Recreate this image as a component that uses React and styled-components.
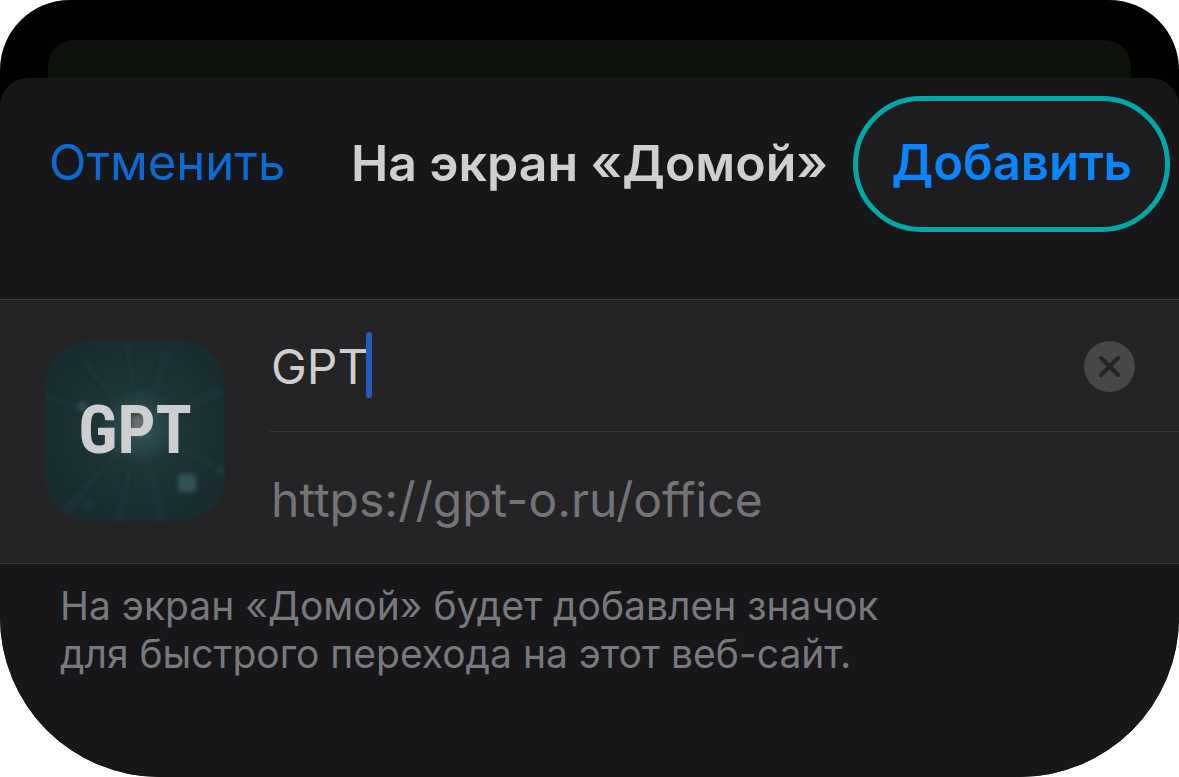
import React, { useState } from "react";
import styled, { createGlobalStyle } from "styled-components";

const GlobalStyle = createGlobalStyle`
  *, *::before, *::after { box-sizing: border-box; }
  body { margin: 0; background: #fff; font-family: Inter, "Liberation Sans", sans-serif; }
  button, input { font: inherit; }
`;

const Screen = styled.main`
  display: flex;
  flex-direction: column;
  min-height: 100vh;
  padding-top: 40px;
  overflow: hidden;
  background: linear-gradient(#000100 50%, #171719 50%);
  border-radius: 70px 70px 160px 160px;
`;

const BackCard = styled.div`
  height: 38px;
  margin: 0 48px;
  background: #0d120c;
  border-radius: 26px 26px 0 0;
`;

const Sheet = styled.form`
  flex: 1;
  background: #171719;
  border-radius: 28px 28px 0 0;
`;

const Header = styled.header`
  display: grid;
  grid-template-columns: 1fr auto 1fr;
  align-items: center;
  padding: 18px 9px 67px 49px;
`;

const Title = styled.h1`
  margin: 0 0 2px -40px;
  font-size: 50px;
  font-weight: 600;
  line-height: 64px;
  white-space: nowrap;
  color: #cfcfd0;
`;

const TextButton = styled.button`
  justify-self: start;
  padding: 0 0 2px;
  border: 0;
  background: none;
  font-size: 49px;
  line-height: 64px;
  color: #0a6bd2;
  cursor: pointer;
`;

const PillButton = styled(TextButton)`
  justify-self: end;
  height: 136px;
  padding: 0 33px 2px;
  border: 5px solid #00a9a8;
  border-radius: 68px;
  background: #1d1d1f;
  font-weight: 600;
  color: #0a84ff;
`;

const Panel = styled.section`
  display: flex;
  align-items: flex-start;
  gap: 45px;
  padding-left: 45px;
  border: solid #38383a;
  border-width: 1px 0;
  background: #242426;
`;

const AppIcon = styled.svg`
  flex: none;
  width: 180px;
  height: 180px;
  margin-top: 41px;
`;

const Fields = styled.div`
  flex: 1;
  min-width: 0;
`;

const Row = styled.div`
  display: flex;
  align-items: center;
  height: 131px;
  padding: 2px 44px 0 1px;
  font-size: 48px;
  line-height: 64px;
  color: #747477;

  & + & { border-top: 1px solid #38383a; height: 132px; padding-top: 4px; }
`;

const NameInput = styled.input`
  field-sizing: content;
  min-width: 1px;
  padding: 0;
  border: 0;
  outline: 0;
  background: none;
  line-height: 64px;
  color: #cecece;
  caret-color: transparent;
`;

const Caret = styled.span`
  flex: none;
  width: 6px;
  height: 66px;
  margin: 0 auto 4px -2px;
  border-radius: 3px;
  background: #285abd;
`;

const ClearButton = styled.button`
  flex: none;
  display: flex;
  padding: 0;
  border: 0;
  background: none;
  cursor: pointer;
`;

const Note = styled.p`
  max-width: 900px;
  margin: 0;
  padding: 18px 0 0 60px;
  font-size: 39px;
  line-height: 48px;
  color: #79797d;
`;

const rays = [
  "M94 88 78 0h8z", "M98 88 116 8l12 4z", "M102 88 174 42l6 12z", "M102 92 180 126v10z",
  "M98 92 124 180h-14z", "M92 92 68 180h12z", "M88 92 14 170l12 4z", "M88 88 0 50v8z",
  "M90 86 32 18l12 2z", "M96 92 104 140h-6z",
];

function GptIcon() {
  return (
    <AppIcon viewBox="0 0 180 180" role="img" aria-label="GPT">
      <defs>
        <clipPath id="iconShape"><rect width="180" height="180" rx="46" /></clipPath>
        <radialGradient id="iconGlow" cx="94" cy="86" r="88" gradientUnits="userSpaceOnUse">
          <stop offset="0" stopColor="#385556" />
          <stop offset=".25" stopColor="#284648" />
          <stop offset=".45" stopColor="#1e3537" />
          <stop offset="1" stopColor="#192d30" />
        </radialGradient>
        <filter id="soft"><feGaussianBlur stdDeviation="2" /></filter>
      </defs>
      <g clipPath="url(#iconShape)">
        <rect width="180" height="180" fill="url(#iconGlow)" />
        <g filter="url(#soft)">
          {rays.map((d) => <path key={d} d={d} fill="#2b474a" opacity=".16" />)}
          <rect x="133" y="133" width="18" height="18" rx="2" fill="#315154" />
          <circle cx="37" cy="65" r="5" fill="#2d4b4e" />
          <circle cx="175" cy="130" r="4" fill="#213a3d" />
          <circle cx="44" cy="163" r="6" fill="#1d3538" />
          <rect x="87" y="75" width="13" height="20" rx="5" fill="#6b6e71" />
        </g>
        <text x="90" y="112" textAnchor="middle" fontFamily='"Roboto Condensed", Roboto, sans-serif' fontWeight="700" fontSize="67" fill="#cdcecf">GPT</text>
      </g>
    </AppIcon>
  );
}

export default function App() {
  const [name, setName] = useState("GPT");
  return (
    <>
      <GlobalStyle />
      <Screen>
        <BackCard />
        <Sheet onSubmit={(e) => e.preventDefault()}>
          <Header>
            <TextButton type="button">Отменить</TextButton>
            <Title>На экран «Домой»</Title>
            <PillButton type="submit">Добавить</PillButton>
          </Header>
          <Panel>
            <GptIcon />
            <Fields>
              <Row>
                <NameInput aria-label="Название" value={name} onChange={(e) => setName(e.target.value)} />
                <Caret />
                <ClearButton type="button" aria-label="Очистить" onClick={() => setName("")}>
                  <svg width="51" height="51" viewBox="0 0 51 51">
                    <circle cx="25.5" cy="25.5" r="25.5" fill="#474749" />
                    <path d="m17 17 17 17m0-17-17 17" stroke="#242426" strokeWidth="4" strokeLinecap="round" />
                  </svg>
                </ClearButton>
              </Row>
              <Row>https://gpt-o.ru/office</Row>
            </Fields>
          </Panel>
          <Note>На экран «Домой» будет добавлен значок для быстрого перехода на этот веб-сайт.</Note>
        </Sheet>
      </Screen>
    </>
  );
}
